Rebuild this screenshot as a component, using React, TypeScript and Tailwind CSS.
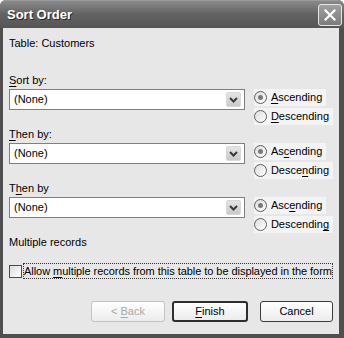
import { ReactNode } from 'react'

function U({ children }: { children: ReactNode }) {
  return <span className="underline underline-offset-[2px]">{children}</span>
}

function Combo() {
  return (
    <div className="w-[242px] h-[21px] bg-white border border-[#7f7f7f] flex items-center justify-between pl-[4px] pr-[3px]">
      <span>(None)</span>
      <div className="w-[15px] h-[15px] rounded-[2px] bg-gradient-to-b from-[#e4e4e4] to-[#c9c9c9] border border-[#d8d8d8] flex items-center justify-center">
        <svg width="9" height="6" viewBox="0 0 9 6">
          <path d="M1 1 L4.5 4.5 L8 1" fill="none" stroke="#3a3a3a" strokeWidth="2" />
        </svg>
      </div>
    </div>
  )
}

function Radio({ checked, label }: { checked?: boolean; label: ReactNode }) {
  return (
    <div className="h-[19px] flex items-center">
      <div className="flex items-center bg-[#f4f4f4] pr-[4px]">
        <div className="w-[13px] h-[13px] rounded-full border border-[#5e5e5e] bg-gradient-to-br from-[#dcdcdc] to-white flex items-center justify-center">
          {checked && <div className="w-[5px] h-[5px] rounded-full bg-[#7a7a7a]" />}
        </div>
        <span className="ml-[4px]">{label}</span>
      </div>
    </div>
  )
}

function Section({ label, asc, desc }: { label: ReactNode; asc: ReactNode; desc: ReactNode }) {
  return (
    <div className="h-[54px] flex flex-col">
      <div className="h-[14px] leading-[14px]">{label}</div>
      <div className="flex items-start mt-[2px]">
        <Combo />
        <div className="ml-[9px] -mt-[1px] flex flex-col">
          <Radio checked label={asc} />
          <Radio label={desc} />
        </div>
      </div>
    </div>
  )
}

function Btn({ children, w, kind }: { children: ReactNode; w: string; kind?: 'default' | 'disabled' }) {
  const border =
    kind === 'default'
      ? 'border-[2px] border-[#2f2f2f]'
      : kind === 'disabled'
        ? 'border border-[#c4c4c4] text-[#a8a8a8]'
        : 'border border-[#3c3c3c]'
  return (
    <div className={`${w} h-[21px] rounded-[3px] bg-gradient-to-b from-white to-[#ececec] flex items-center justify-center ${border}`}>
      <span className="whitespace-pre">{children}</span>
    </div>
  )
}

export default function App() {
  return (
    <div className="w-[344px] h-[338px] bg-[#4f4f4f] rounded-t-[6px] flex flex-col font-['Liberation_Sans',sans-serif] text-[11px] text-black overflow-hidden">
      {/* title bar */}
      <div className="h-[28px] flex items-center justify-between pl-[7px] pr-[2px] bg-gradient-to-b from-[#8a8a8a] via-[#626262] to-[#555555] border-t border-[#9a9a9a] rounded-t-[6px]">
        <span className="text-white font-bold text-[13px] [text-shadow:1px_1px_0_#2a2a2a]">Sort Order</span>
        <div className="w-[24px] h-[22px] rounded-[3px] border border-[#e6e6e6] bg-gradient-to-b from-[#a0a0a0] to-[#7c7c7c] flex items-center justify-center">
          <svg width="12" height="12" viewBox="0 0 12 12">
            <path d="M1.5 1.5 L10.5 10.5 M10.5 1.5 L1.5 10.5" stroke="white" strokeWidth="2.2" strokeLinecap="square" />
          </svg>
        </div>
      </div>

      {/* body */}
      <div className="flex-1 ml-[3px] mr-[5px] mb-[4px] bg-[#e7e7e7] flex flex-col px-[6px] pt-[8px]">
        <div className="h-[14px] leading-[14px]">Table: Customers</div>

        <div className="mt-[23px]">
          <Section label={<><U>S</U>ort by:</>} asc={<><U>A</U>scending</>} desc={<><U>D</U>escending</>} />
          <Section label={<><U>T</U>hen by:</>} asc={<>As<U>c</U>ending</>} desc={<>Desce<U>n</U>ding</>} />
          <Section label={<>T<U>h</U>en by</>} asc={<>Asc<U>e</U>nding</>} desc={<>Descendin<U>g</U></>} />
        </div>

        <div className="h-[14px] leading-[14px]">Multiple records</div>

        <div className="mt-[14px] flex items-center">
          <div className="w-[13px] h-[13px] shrink-0 border border-[#4a4a4a] bg-gradient-to-br from-[#dcdcdc] to-white" />
          <div className="ml-[1px] h-[16px] leading-[14px] border border-dotted border-[#333] whitespace-nowrap tracking-[-0.05px]">
            <span>Allow <U>m</U>ultiple records from this table to be displayed in the form</span>
          </div>
        </div>

        <div className="mt-[22px] flex justify-end">
          <Btn w="w-[74px]" kind="disabled">&lt; <U>B</U>ack</Btn>
          <div className="w-[7px]" />
          <Btn w="w-[76px]" kind="default"><U>F</U>inish</Btn>
          <div className="w-[12px]" />
          <Btn w="w-[73px]">Cancel</Btn>
        </div>
      </div>
    </div>
  )
}
